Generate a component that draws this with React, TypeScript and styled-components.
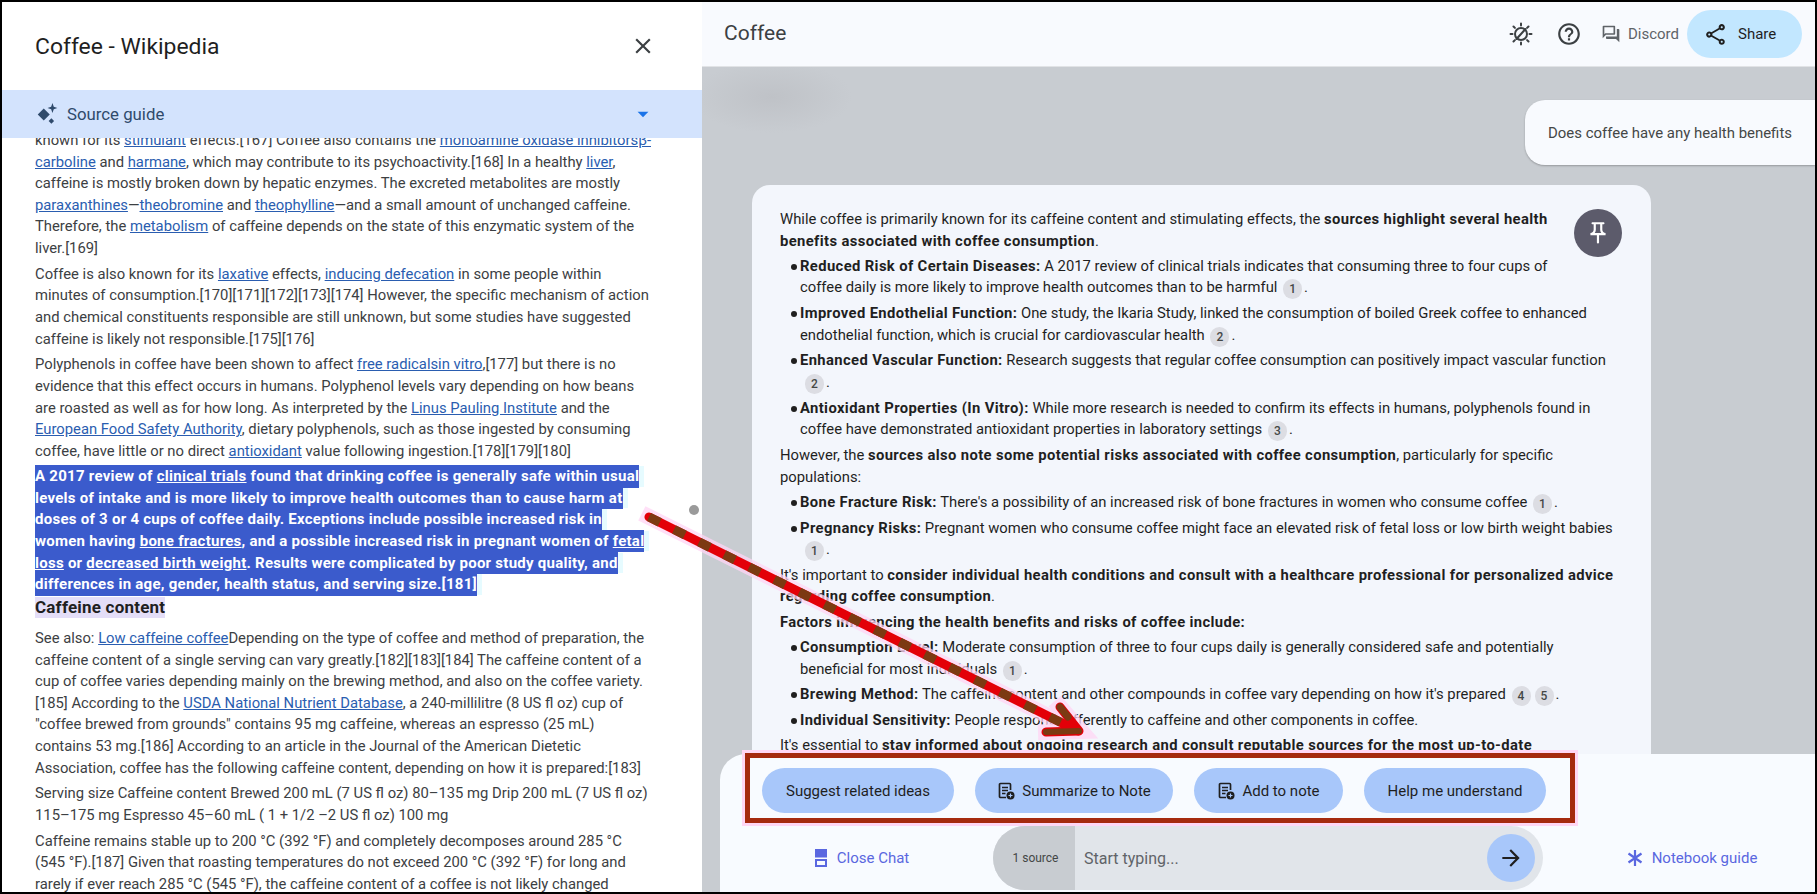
import React from 'react';
import styled, { createGlobalStyle } from 'styled-components';
import { MdClose, MdHelpOutline, MdOutlineShare, MdArrowForward, MdArrowDropDown, MdOutlinePushPin } from 'react-icons/md';

const GlobalStyle = createGlobalStyle`
  html, body, #root { margin: 0; height: 100%; }
  body { font-family: Roboto, "Noto Sans", sans-serif; background: #000; overflow: hidden; }
  * { box-sizing: border-box; }
`;

const Frame = styled.div`
  position: relative;
  width: 1817px;
  height: 894px;
  border: 2px solid #000;
  display: grid;
  grid-template-columns: 700px 1fr;
  overflow: hidden;
  background: #fff;
`;

const SourcePanel = styled.aside`
  display: flex;
  flex-direction: column;
  height: 890px;
  background: #fff;
  overflow: hidden;
  color: #3c4043;
`;

const SourceHeader = styled.header`
  flex: 0 0 88px;
  display: flex;
  align-items: center;
  justify-content: space-between;
  padding: 0 46px 0 33px;
`;

const SourceTitle = styled.h1`
  margin: 0;
  font-size: 22.9px;
  font-weight: 400;
  color: #1f1f1f;
`;

const CloseButton = styled.span`
  display: flex;
  color: #3c4043;
  font-size: 26px;
`;

const GuideBand = styled.div`
  flex: 0 0 48px;
  position: relative;
  z-index: 1;
  display: flex;
  align-items: center;
  gap: 8px;
  padding: 0 33px 0 33px;
  background: #d3e3fd;
  color: #2f4a6b;
  font-size: 16.8px;
`;

const GuideCaret = styled.span`
  margin-left: auto;
  display: flex;
  color: #1a73e8;
  font-size: 26px;
  margin-right: 13px;
`;

const SourceText = styled.div`
  flex: 1;
  overflow: hidden;
  padding: 0 33px;
  margin-top: -8px;
  font-size: 14.8px;
  line-height: 21.6px;
  white-space: nowrap;
`;

const Para = styled.p`
  margin: 0 0 4.2px;
`;

const Wiki = styled.a`
  color: #2a5db0;
  text-decoration: underline;
`;

const Selected = styled.p`
  margin: 0;
  font-size: 15px;
  font-weight: 700;
  letter-spacing: 0.26px;
  color: #fff;
  a { color: #fff; text-decoration: underline; }
  span {
    background: #3b5bcc;
    padding: 2.2px 0;
    box-shadow: 6px 0 0 -1px #e6fbff;
  }
`;

const SectionTitle = styled.h2`
  display: table;
  margin: 1px 0 10px;
  background: #e4def8;
  color: #1f1f1f;
  font-size: 17px;
  font-weight: 700;
  line-height: 21px;
  letter-spacing: 0.2px;
`;

const Main = styled.main`
  display: flex;
  flex-direction: column;
  height: 890px;
  background: #c8ccd1;
  overflow: hidden;
`;

const TopBar = styled.header`
  flex: 0 0 65px;
  display: flex;
  align-items: center;
  padding: 0 13px 0 22px;
  background: #f8fafe;
  border-bottom: 1px solid #e1e3e6;
`;

const NotebookName = styled.div`
  font-size: 21px;
  color: #3c4043;
  margin: 0 auto 2px 0;
`;

const BarIcon = styled.span<{ $gap: number }>`
  display: flex;
  color: #3c4043;
  font-size: 26px;
  margin-right: ${({ $gap }) => $gap}px;
`;

const DiscordLink = styled.span`
  display: flex;
  align-items: center;
  gap: 7px;
  margin-right: 8px;
  color: #5f6368;
  font-size: 15px;
`;

const ShareButton = styled.span`
  display: flex;
  align-items: center;
  gap: 10px;
  width: 115px;
  height: 48px;
  padding-left: 16px;
  border-radius: 24px;
  background: #c2e7ff;
  color: #1f1f1f;
  font-size: 15px;
`;

const ChatArea = styled.section`
  flex: 1;
  min-height: 0;
  overflow: hidden;
  display: flex;
  flex-direction: column;
  background: radial-gradient(ellipse 80px 36px at 70px 30px, #bfc2c7, transparent), #c8ccd1;
`;

const UserBubble = styled.div`
  flex: 0 0 65px;
  align-self: flex-end;
  width: 290px;
  margin-top: 33px;
  padding-left: 23px;
  display: flex;
  align-items: center;
  background: #f8fafe;
  border-radius: 20px 0 0 20px;
  box-shadow: 0 1px 2px rgba(0, 0, 0, 0.25);
  color: #444746;
  font-size: 14.95px;
`;

const AnswerCard = styled.article`
  flex: 0 0 auto;
  position: relative;
  width: 899px;
  margin: 20px 0 0 50px;
  padding: 24px 28px 40px;
  background: #f3f6fc;
  border-radius: 18px 18px 0 0;
  color: #1f1f1f;
  font-size: 14.8px;
  line-height: 21.6px;
  white-space: nowrap;
  b { font-weight: 700; letter-spacing: 0.37px; }
`;

const PinButton = styled.span`
  position: absolute;
  top: 24px;
  right: 29px;
  width: 48px;
  height: 48px;
  border-radius: 50%;
  background: #5c5b6b;
  color: #fff;
  font-size: 26px;
  display: flex;
  align-items: center;
  justify-content: center;
`;

const AnswerPara = styled.p`
  margin: 0 0 3.7px;
`;

const Bullet = styled.p`
  position: relative;
  margin: 0 0 3.7px;
  padding-left: 20px;
  &::before {
    content: '';
    position: absolute;
    left: 11px;
    top: 8px;
    width: 6px;
    height: 6px;
    border-radius: 50%;
    background: #1f1f1f;
  }
`;

const Cite = styled.span<{ $wrapped?: boolean }>`
  display: inline-flex;
  align-items: center;
  justify-content: center;
  width: 19px;
  height: 20px;
  margin: 0 2px 0 ${({ $wrapped }) => ($wrapped ? '5px' : '2px')};
  border-radius: 10px;
  background: #dcdde3;
  color: #444746;
  font-size: 12px;
  font-weight: 500;
  vertical-align: -1px;
  line-height: 1;
`;

const Composer = styled.footer`
  flex: 0 0 138px;
  margin-left: 18px;
  background: #f8fbff;
  border-radius: 26px 0 0 0;
  position: relative;
  display: flex;
  flex-direction: column;
`;

const SuggestRow = styled.div`
  align-self: flex-start;
  display: flex;
  gap: 21px;
  width: 830px;
  height: 70px;
  margin: -1px 0 0 25px;
  padding: 10px 12px;
  border: 5px solid #a52a0e;
  box-shadow: 0 0 0 3px #ffd6f4;
`;

const SuggestChip = styled.span<{ $width: number }>`
  flex: 0 0 ${({ $width }) => $width}px;
  height: 45px;
  display: flex;
  align-items: center;
  justify-content: center;
  gap: 7px;
  border-radius: 23px;
  background: #a8c7fa;
  color: #1f1f1f;
  font-size: 15px;
`;

const InputRow = styled.div`
  display: grid;
  grid-template-columns: 273px 550px 1fr;
  align-items: center;
  margin-top: 3px;
`;

const SideAction = styled.span<{ $shift: number }>`
  display: flex;
  align-items: center;
  justify-content: center;
  gap: 9px;
  padding-left: ${({ $shift }) => $shift}px;
  color: #5a67e0;
  font-size: 15px;
`;

const InputPill = styled.div`
  height: 64px;
  display: flex;
  align-items: center;
  border-radius: 32px;
  overflow: hidden;
  background: #e1e5ea;
  padding-right: 8px;
`;

const SourceCount = styled.span`
  flex: 0 0 82px;
  height: 100%;
  display: flex;
  align-items: center;
  justify-content: center;
  padding-left: 3px;
  background: #c8ccd1;
  color: #444746;
  font-size: 12px;
`;

const Placeholder = styled.span`
  flex: 1;
  padding-left: 9px;
  color: #5f6368;
  font-size: 16px;
`;

const SendButton = styled.span`
  width: 48px;
  height: 48px;
  display: flex;
  align-items: center;
  justify-content: center;
  border-radius: 50%;
  background: #a8c7fa;
  color: #1f1f1f;
  font-size: 26px;
`;

const ScrollDot = styled.span`
  position: absolute;
  left: 687px;
  top: 503px;
  width: 10px;
  height: 10px;
  border-radius: 50%;
  background: #9a9a9a;
`;

const ArrowLayer = styled.svg`
  position: absolute;
  left: -2px;
  top: -2px;
  pointer-events: none;
`;

const SparkIcon = () => (
  <svg width="24" height="24" viewBox="0 0 22 22" fill="#2f4a6b">
    <path d="M8 6l5.500 5.500L8 17l-5.500-5.500z" />
    <path d="M16 1l1.200 3.300L20.500 5.500l-3.300 1.200L16 10l-1.200-3.300L11.500 5.500l3.300-1.200z" />
    <path d="M15 15l2.500 2.500L15 20l-2.500-2.500z" />
  </svg>
);

const ThemeIcon = () => (
  <svg width="26" height="26" viewBox="0 0 26 26" fill="none" stroke="#3c4043" strokeWidth="2" strokeLinecap="round">
    <circle cx="13" cy="13" r="6" />
    <path d="M8.500 18 L17.500 8" />
    <path d="M13 2.500v2M13 21.500v2M2.500 13h2M21.500 13h2M5.500 5.500l1.400 1.400M19.100 19.100l1.400 1.400M5.500 20.500l1.400-1.400M19.100 6.900l1.400-1.400" />
  </svg>
);

const ForumIcon = () => (
  <svg width="20" height="20" viewBox="0 0 24 24" fill="#5f6368">
    <path d="M15 4v7H5.170L4 12.170V4h11m1-2H3c-.55 0-1 .45-1 1v14l4-4h10c.55 0 1-.45 1-1V3c0-.55-.45-1-1-1zm5 4h-2v9H6v2c0 .55.45 1 1 1h11l4 4V7c0-.55-.45-1-1-1z" />
  </svg>
);

const NoteAddIcon = () => (
  <svg width="18" height="19" viewBox="0 0 18 19" fill="none" stroke="#1f1f1f" strokeWidth="1.700">
    <path d="M9 16.500H3.500A1 1 0 0 1 2.500 15.500V3.500A1 1 0 0 1 3.500 2.500h9a1 1 0 0 1 1 1V9" />
    <path d="M5 6.500h6M5 9.500h6M5 12.500h3.500" />
    <circle cx="13.500" cy="14.500" r="4" fill="#1f1f1f" stroke="none" />
    <path d="M13.500 12.500v4M11.500 14.500h4" stroke="#a8c7fa" strokeWidth="1.200" />
  </svg>
);

const PanelIcon = () => (
  <svg width="14" height="20" viewBox="0 0 14 20" fill="#5a67e0">
    <rect x="1" y="1" width="12" height="8.500" />
    <path d="M1 11h12v8H1zm2 2v4h8v-4z" />
  </svg>
);

const GuideStarIcon = () => (
  <svg width="16" height="20" viewBox="0 0 16 20" fill="none" stroke="#5a67e0" strokeWidth="2.200">
    <path d="M8 2v16M1.500 5.500l13 9M14.500 5.500l-13 9" />
  </svg>
);

const Arrow = () => (
  <ArrowLayer width="1817" height="894" viewBox="0 0 1817 894" fill="none">
    <g stroke="#ffd6f4" strokeOpacity="0.75" strokeWidth="16" strokeLinecap="square">
      <path d="M649 517 L1072 728" />
      <path d="M1060 707 L1081 731 L1046 732" />
    </g>
    <path d="M649 517 L1078 731" stroke="#e30008" strokeWidth="9" strokeLinecap="round" />
    <path d="M649 517 L1078 731" stroke="#7c3a12" strokeWidth="9" strokeDasharray="12 16" strokeLinecap="butt" />
    <path d="M1060 707 L1079 731 L1046 732" stroke="#e30008" strokeWidth="9" strokeLinecap="round" strokeLinejoin="round" />
    <path d="M1046 732 L1079 731" stroke="#7c3a12" strokeWidth="6" strokeLinecap="round" />
    <path d="M1060 707 L1068 717" stroke="#7c3a12" strokeWidth="7" strokeLinecap="round" />
  </ArrowLayer>
);

export default function App() {
  return (
    <>
      <GlobalStyle />
      <Frame>
        <SourcePanel>
          <SourceHeader>
            <SourceTitle>Coffee - Wikipedia</SourceTitle>
            <CloseButton><MdClose /></CloseButton>
          </SourceHeader>
          <GuideBand>
            <SparkIcon />
            Source guide
            <GuideCaret><MdArrowDropDown /></GuideCaret>
          </GuideBand>
          <SourceText>
            <Para>
              known for its <Wiki>stimulant</Wiki> effects.[167] Coffee also contains the <Wiki>monoamine oxidase inhibitorsβ-</Wiki><br />
              <Wiki>carboline</Wiki> and <Wiki>harmane</Wiki>, which may contribute to its psychoactivity.[168] In a healthy <Wiki>liver</Wiki>,<br />
              caffeine is mostly broken down by hepatic enzymes. The excreted metabolites are mostly<br />
              <Wiki>paraxanthines</Wiki>—<Wiki>theobromine</Wiki> and <Wiki>theophylline</Wiki>—and a small amount of unchanged caffeine.<br />
              Therefore, the <Wiki>metabolism</Wiki> of caffeine depends on the state of this enzymatic system of the<br />
              liver.[169]
            </Para>
            <Para>
              Coffee is also known for its <Wiki>laxative</Wiki> effects, <Wiki>inducing defecation</Wiki> in some people within<br />
              minutes of consumption.[170][171][172][173][174] However, the specific mechanism of action<br />
              and chemical constituents responsible are still unknown, but some studies have suggested<br />
              caffeine is likely not responsible.[175][176]
            </Para>
            <Para>
              Polyphenols in coffee have been shown to affect <Wiki>free radicalsin vitro</Wiki>,[177] but there is no<br />
              evidence that this effect occurs in humans. Polyphenol levels vary depending on how beans<br />
              are roasted as well as for how long. As interpreted by the <Wiki>Linus Pauling Institute</Wiki> and the<br />
              <Wiki>European Food Safety Authority</Wiki>, dietary polyphenols, such as those ingested by consuming<br />
              coffee, have little or no direct <Wiki>antioxidant</Wiki> value following ingestion.[178][179][180]
            </Para>
            <Selected>
              <span>A 2017 review of <a>clinical trials</a> found that drinking coffee is generally safe within usual</span><br />
              <span>levels of intake and is more likely to improve health outcomes than to cause harm at</span><br />
              <span>doses of 3 or 4 cups of coffee daily. Exceptions include possible increased risk in</span><br />
              <span>women having <a>bone fractures</a>, and a possible increased risk in pregnant women of <a>fetal</a></span><br />
              <span><a>loss</a> or <a>decreased birth weight</a>. Results were complicated by poor study quality, and</span><br />
              <span>differences in age, gender, health status, and serving size.[181]</span>
            </Selected>
            <SectionTitle>Caffeine content</SectionTitle>
            <Para>
              See also: <Wiki>Low caffeine coffee</Wiki>Depending on the type of coffee and method of preparation, the<br />
              caffeine content of a single serving can vary greatly.[182][183][184] The caffeine content of a<br />
              cup of coffee varies depending mainly on the brewing method, and also on the coffee variety.<br />
              [185] According to the <Wiki>USDA National Nutrient Database</Wiki>, a 240-millilitre (8 US fl oz) cup of<br />
              "coffee brewed from grounds" contains 95 mg caffeine, whereas an espresso (25 mL)<br />
              contains 53 mg.[186] According to an article in the Journal of the American Dietetic<br />
              Association, coffee has the following caffeine content, depending on how it is prepared:[183]
            </Para>
            <Para>
              Serving size Caffeine content Brewed 200 mL (7 US fl oz) 80–135 mg Drip 200 mL (7 US fl oz)<br />
              115–175 mg Espresso 45–60 mL ( 1 + 1/2 –2 US fl oz) 100 mg
            </Para>
            <Para>
              Caffeine remains stable up to 200 °C (392 °F) and completely decomposes around 285 °C<br />
              (545 °F).[187] Given that roasting temperatures do not exceed 200 °C (392 °F) for long and<br />
              rarely if ever reach 285 °C (545 °F), the caffeine content of a coffee is not likely changed
            </Para>
          </SourceText>
        </SourcePanel>
        <Main>
          <TopBar>
            <NotebookName>Coffee</NotebookName>
            <BarIcon $gap={22}><ThemeIcon /></BarIcon>
            <BarIcon $gap={19}><MdHelpOutline /></BarIcon>
            <DiscordLink><ForumIcon />Discord</DiscordLink>
            <ShareButton><MdOutlineShare size={25} />Share</ShareButton>
          </TopBar>
          <ChatArea>
            <UserBubble>Does coffee have any health benefits</UserBubble>
            <AnswerCard>
              <PinButton><MdOutlinePushPin /></PinButton>
              <AnswerPara>
                While coffee is primarily known for its caffeine content and stimulating effects, the <b>sources highlight several health</b><br />
                <b>benefits associated with coffee consumption</b>.
              </AnswerPara>
              <Bullet>
                <b>Reduced Risk of Certain Diseases:</b> A 2017 review of clinical trials indicates that consuming three to four cups of<br />
                coffee daily is more likely to improve health outcomes than to be harmful <Cite>1</Cite>.
              </Bullet>
              <Bullet>
                <b>Improved Endothelial Function:</b> One study, the Ikaria Study, linked the consumption of boiled Greek coffee to enhanced<br />
                endothelial function, which is crucial for cardiovascular health <Cite>2</Cite>.
              </Bullet>
              <Bullet>
                <b>Enhanced Vascular Function:</b> Research suggests that regular coffee consumption can positively impact vascular function<br />
                <Cite $wrapped>2</Cite>.
              </Bullet>
              <Bullet>
                <b>Antioxidant Properties (In Vitro):</b> While more research is needed to confirm its effects in humans, polyphenols found in<br />
                coffee have demonstrated antioxidant properties in laboratory settings <Cite>3</Cite>.
              </Bullet>
              <AnswerPara>
                However, the <b>sources also note some potential risks associated with coffee consumption</b>, particularly for specific<br />
                populations:
              </AnswerPara>
              <Bullet>
                <b>Bone Fracture Risk:</b> There's a possibility of an increased risk of bone fractures in women who consume coffee <Cite>1</Cite>.
              </Bullet>
              <Bullet>
                <b>Pregnancy Risks:</b> Pregnant women who consume coffee might face an elevated risk of fetal loss or low birth weight babies<br />
                <Cite $wrapped>1</Cite>.
              </Bullet>
              <AnswerPara>
                It's important to <b>consider individual health conditions and consult with a healthcare professional for personalized advice</b><br />
                <b>regarding coffee consumption</b>.
              </AnswerPara>
              <AnswerPara><b>Factors influencing the health benefits and risks of coffee include:</b></AnswerPara>
              <Bullet>
                <b>Consumption Level:</b> Moderate consumption of three to four cups daily is generally considered safe and potentially<br />
                beneficial for most individuals <Cite>1</Cite>.
              </Bullet>
              <Bullet>
                <b>Brewing Method:</b> The caffeine content and other compounds in coffee vary depending on how it's prepared <Cite>4</Cite><Cite>5</Cite>.
              </Bullet>
              <Bullet>
                <b>Individual Sensitivity:</b> People respond differently to caffeine and other components in coffee.
              </Bullet>
              <AnswerPara>
                It's essential to <b>stay informed about ongoing research and consult reputable sources for the most up-to-date</b>
              </AnswerPara>
            </AnswerCard>
          </ChatArea>
          <Composer>
            <SuggestRow>
              <SuggestChip $width={192}>Suggest related ideas</SuggestChip>
              <SuggestChip $width={198}><NoteAddIcon />Summarize to Note</SuggestChip>
              <SuggestChip $width={149}><NoteAddIcon />Add to note</SuggestChip>
              <SuggestChip $width={182}>Help me understand</SuggestChip>
            </SuggestRow>
            <InputRow>
              <SideAction $shift={10}><PanelIcon />Close Chat</SideAction>
              <InputPill>
                <SourceCount>1 source</SourceCount>
                <Placeholder>Start typing...</Placeholder>
                <SendButton><MdArrowForward /></SendButton>
              </InputPill>
              <SideAction $shift={26}><GuideStarIcon />Notebook guide</SideAction>
            </InputRow>
          </Composer>
        </Main>
        <ScrollDot />
        <Arrow />
      </Frame>
    </>
  );
}
